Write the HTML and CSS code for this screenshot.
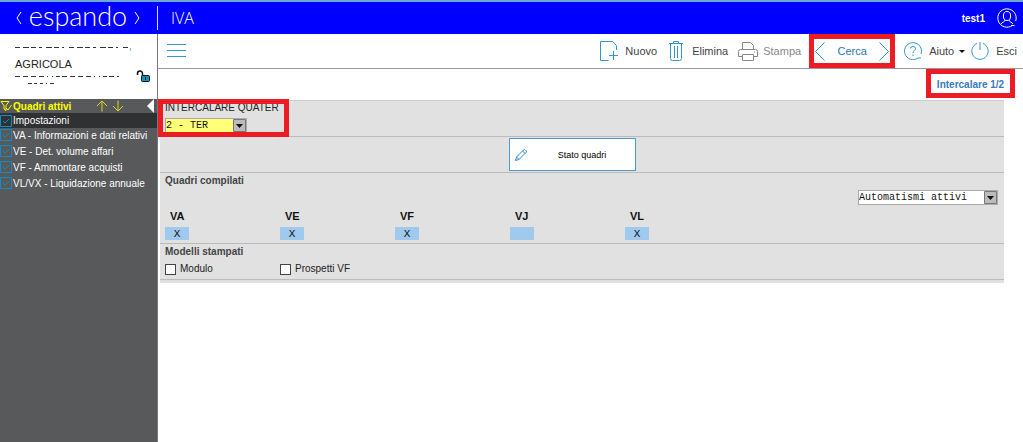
FILE: index.html
```html
<!DOCTYPE html>
<html lang="it">
<head>
<meta charset="utf-8">
<title>espando IVA</title>
<link rel="stylesheet" href="styles.css">
</head>
<body>
<header class="topbar">
  <div class="brand">
    <svg class="bracket" viewBox="0 0 6 14"><path d="M5 1 1 7l4 6"/></svg>
    <span class="brand-name">espando</span>
    <svg class="bracket" viewBox="0 0 6 14"><path d="m1 1 4 6-4 6"/></svg>
  </div>
  <h1 class="module">IVA</h1>
  <span class="user">test1</span>
  <svg class="avatar" viewBox="0 0 20 20"><path d="M15.500 17.400A9.200 9.200 0 1 1 18.700 13"/><ellipse cx="10" cy="8" rx="3.600" ry="4.500"/><path d="M4 16c1-2 4-2 4-4m4 0c0 2 3 2 4 4M14 17.500h3.500"/></svg>
</header>
<div class="shell">
  <aside class="side">
    <div class="company">
      <svg class="redacted" viewBox="0 0 116 6"><path stroke-dasharray="5 3 6 2 5 3 3 4 6 2 5 3 2 5" d="M0 1.500h115"/><path class="faint" d="M115.500 2v3"/></svg>
      <div class="company-name">AGRICOLA</div>
      <svg class="redacted low" viewBox="0 0 116 12"><path stroke-dasharray="5 3 5 3 5 3 5 3 1 4 1 3 4 2" d="M0 1.500h104"/><path stroke-dasharray="4 2 3 3 3 3 1 3" d="M13 8.500h28"/></svg>
      <svg class="lock" viewBox="0 0 14 13"><path class="shackle" d="M1.500 5V3.500a2.500 2.500 0 0 1 5 0V6"/><rect x="5.500" y="5.500" width="8" height="6" rx="1"/><path d="M9.500 7v3"/></svg>
    </div>
    <nav class="menu">
      <div class="menu-head">
        <svg class="filter" viewBox="0 0 12 12"><path d="M1 1.500h8L6 5.500v5L4 9V5.500zM6 8l2 2 3.500-5"/></svg>
        <span class="menu-title">Quadri attivi</span>
        <svg class="arrow" viewBox="0 0 12 12"><path d="M6 11.500V1M1 6l5-5 5 5"/></svg>
        <svg class="arrow" viewBox="0 0 12 12"><path d="M6 .500V11M1 6l5 5 5-5"/></svg>
        <svg class="collapse" viewBox="0 0 7 14"><path d="M7 0v14L0 7z"/></svg>
      </div>
      <a class="item current" href="#"><svg class="tick" viewBox="0 0 12 12"><path d="M.5.5h11v11H.5zM3 6l2 2 4-4"/></svg>Impostazioni</a>
      <a class="item" href="#"><svg class="tick" viewBox="0 0 12 12"><path d="M.5.5h11v11H.5zM3 6l2 2 4-4"/></svg>VA - Informazioni e dati relativi</a>
      <a class="item" href="#"><svg class="tick" viewBox="0 0 12 12"><path d="M.5.5h11v11H.5zM3 6l2 2 4-4"/></svg>VE - Det. volume affari</a>
      <a class="item" href="#"><svg class="tick" viewBox="0 0 12 12"><path d="M.5.5h11v11H.5zM3 6l2 2 4-4"/></svg>VF - Ammontare acquisti</a>
      <a class="item" href="#"><svg class="tick" viewBox="0 0 12 12"><path d="M.5.5h11v11H.5zM3 6l2 2 4-4"/></svg>VL/VX - Liquidazione annuale</a>
    </nav>
  </aside>
  <main class="main">
    <div class="toolbar">
      <button class="tool burger" aria-label="Menu"><svg viewBox="0 0 19 14"><path d="M0 .5h19M0 6.500h19M0 12.500h19"/></svg></button>
      <button class="tool nuovo"><svg viewBox="0 0 18 20"><path d="M8.500 19.500H.5V.5h12l4 4V9M13.500 10v9M9 14.500h9"/></svg>Nuovo</button>
      <button class="tool elimina"><svg viewBox="0 0 14 20"><path d="M0 2.500h14M4.500 2.500V.5h5v2M1.500 2.500v15q0 2 2 2h7q2 0 2-2v-15M5.500 5v12M8.500 5v12"/></svg>Elimina</button>
      <button class="tool stampa" disabled><svg viewBox="0 0 20 20"><path d="M4.500 8V1.500h8l3 3V8M4.500 15.500h-4v-5q0-2 2-2h15q2 0 2 2v5h-4M4.500 13.500h11v6h-11zM16 11h1"/></svg>Stampa</button>
      <div class="search marked">
        <button class="tool" aria-label="Precedente"><svg viewBox="0 0 10 19"><path d="m9.500.5-9 9 9 9"/></svg></button>
        <button class="tool cerca">Cerca</button>
        <button class="tool" aria-label="Successivo"><svg viewBox="0 0 10 19"><path d="m.5.5 9 9-9 9"/></svg></button>
      </div>
      <button class="tool aiuto"><svg viewBox="0 0 18 18"><path d="M14 16A8.500 8.500 0 1 1 17 12M14 16h3M6.500 6.500q0-2 2.500-2t2.500 2c0 2-2.500 2-2.500 4.500M9 12.500v1.500"/></svg>Aiuto<span class="caret"></span></button>
      <button class="tool esci"><svg viewBox="0 0 18 18"><path d="M6 1.500a8.200 8.200 0 1 0 6 0M9 0v8"/></svg>Esci</button>
    </div>
    <div class="pager"><span class="page marked">Intercalare 1/2</span></div>
    <form class="panel">
      <section class="row selector">
        <label for="inter">INTERCALARE QUATER</label>
        <select id="inter" class="combo yellow"><option>2 - TER</option></select>
        <div class="outline"></div>
      </section>
      <section class="row status">
        <button type="button" class="stato"><svg viewBox="0 0 12 12"><path d="m.5 11.500 1-3.500 7-7q1-1 2 0l.5.500q1 1 0 2l-7 7zM7.500 2l2.500 2.500M1.500 8 4 10.500"/></svg><span>Stato quadri</span></button>
      </section>
      <section class="row filled">
        <h2>Quadri compilati</h2>
        <select class="combo auto" aria-label="Automatismi"><option>Automatismi attivi</option></select>
        <div class="fields">
          <label>VA<input value="X"></label>
          <label>VE<input value="X"></label>
          <label>VF<input value="X"></label>
          <label>VJ<input value=""></label>
          <label>VL<input value="X"></label>
        </div>
      </section>
      <section class="row printed">
        <h2>Modelli stampati</h2>
        <div class="checks">
          <label><input type="checkbox">Modulo</label>
          <label><input type="checkbox">Prospetti VF</label>
        </div>
      </section>
    </form>
  </main>
</div>
</body>
</html>
```

FILE: styles.css
```css
* { box-sizing: border-box; }
body {
  margin: 0;
  min-height: 100vh;
  display: flex;
  flex-direction: column;
  font-family: "Liberation Sans", Arial, sans-serif;
  font-size: 10px;
  color: #222;
  background: #fff;
}
svg { display: block; flex: none; fill: none; stroke: currentColor; }
button { font: inherit; color: inherit; border: 0; padding: 0; background: none; }
h1, h2 { margin: 0; }

.topbar {
  display: flex;
  align-items: center;
  height: 34px;
  border-top: 2px solid #68a9cd;
  background: #00f;
  color: #fff;
  padding-right: 6px;
}
.brand {
  display: flex;
  align-items: center;
  justify-content: space-between;
  width: 158px;
  height: 24px;
  padding: 0 17px 0 16px;
  border-right: 1px solid #dde;
}
.bracket { width: 6px; height: 14px; }
.brand-name { font: 300 27px/26px Lato, sans-serif; height: 30px; }
.module { flex: 1; padding-left: 13px; font: 300 16px/20px "Open Sans", sans-serif; }
.user { font-weight: bold; margin-right: 12px; }
.avatar { width: 20px; height: 20px; }

.shell { display: flex; flex: 1; }
.side {
  width: 158px;
  flex: none;
  display: flex;
  flex-direction: column;
  border-right: 1px solid #777;
}
.company { position: relative; height: 65px; padding: 12px 0 0 15px; }
.redacted { width: 116px; height: 6px; stroke: #333; }
.redacted.low { height: 12px; }
.redacted .faint { stroke: #8bc4e4; }
.company-name { margin: 5px 0 4px; font-size: 11px; line-height: 14px; }
.lock { position: absolute; right: 7px; bottom: 16px; width: 14px; height: 13px; color: #111; }
.lock rect { fill: #178fc0; }
.lock .shackle { stroke-width: 1.5; }

.menu { flex: 1; background: #57595b; color: #fff; }
.menu-head { display: flex; align-items: center; height: 14px; color: #ff0; }
.filter { width: 12px; height: 12px; }
.menu-title { flex: 1; padding-left: 1px; font-weight: bold; }
.arrow { width: 12px; height: 12px; margin-right: 4px; color: #d8d820; }
.collapse { width: 7px; height: 14px; margin: 0 3px 0 19px; fill: #fff; stroke: none; }
.item {
  display: flex;
  align-items: center;
  gap: 1px;
  height: 16px;
  padding-bottom: 2px;
  color: #fff;
  text-decoration: none;
  white-space: nowrap;
}
.item.current { height: 15px; padding-bottom: 0; background: #303133; }
.tick { width: 12px; height: 12px; color: #158cc0; }

.main { flex: 1; min-width: 0; }
.toolbar {
  display: flex;
  align-items: center;
  height: 35px;
  border-bottom: 1px solid #999;
  padding: 0 6px 0 9px;
}
.tool { display: flex; align-items: center; gap: 7px; font-size: 11px; color: #444; white-space: nowrap; }
.tool svg { color: #2e98cf; }
.burger { margin-right: auto; }
.burger svg { width: 19px; height: 14px; }
.nuovo svg { width: 18px; height: 20px; }
.elimina { margin-left: 12px; gap: 9px; }
.elimina svg { width: 14px; height: 20px; }
.stampa { margin-left: 10px; gap: 5px; }
.stampa, .stampa svg { color: #888; }
.stampa svg { width: 20px; height: 20px; }
.marked { border: 5px solid #ed1c24; }
.search {
  display: flex;
  align-items: center;
  justify-content: space-between;
  width: 86px;
  height: 34px;
  margin: 0 9px 0 8px;
  padding: 0 1px;
}
.search svg { width: 10px; height: 19px; }
.tool.cerca { color: #2874b4; }
.aiuto svg, .esci svg { width: 18px; height: 18px; }
.caret { border: 3px solid transparent; border-top-color: #111; border-bottom: 0; margin-left: -2px; }
.esci { margin-left: 6px; }

.pager { display: flex; justify-content: flex-end; height: 31px; padding-right: 8px; }
.page { width: 89px; height: 29px; text-align: center; font-weight: bold; line-height: 21px; color: #3878bd; }

.panel { margin: 0 19px 0 2px; background: #e1e1e1; border-top: 1px solid #ccc; padding-bottom: 3px; }
.row { border-bottom: 1px solid #bbb; padding-left: 5px; }
.selector { position: relative; height: 36px; }
.selector label { display: block; line-height: 14px; }
.outline {
  position: absolute;
  left: -2px;
  top: -2px;
  width: 131px;
  height: 38px;
  border: 5px solid #ed1c24;
}
.combo {
  display: block;
  appearance: none;
  height: 15px;
  border: 1px solid #aaa;
  border-radius: 0;
  padding: 0;
  font: 10px/13px "Liberation Mono", monospace;
  color: #111;
  background: #fff url("data:image/svg+xml,%3Csvg xmlns='http://www.w3.org/2000/svg' width='13' height='13'%3E%3Cpath d='M.5.5h12v12H.5z' fill='%23bbb' stroke='%23777'/%3E%3Cpath d='M3 5h7L6.500 9z' fill='%23111'/%3E%3C/svg%3E") right center no-repeat;
}
.yellow { width: 82px; margin-top: 3px; background-color: #ffff78; }
.status { display: flex; justify-content: center; height: 36px; padding: 1px 19px 0 0; }
.stato {
  display: flex;
  align-items: center;
  width: 127px;
  height: 33px;
  padding: 0 5px;
  border: 1px solid #4a9bd0;
  background: #fff;
  font-size: 9px;
  color: #000;
}
.stato svg { width: 12px; height: 12px; color: #2889d0; }
.stato span { flex: 1; padding-left: 7px; }
h2 { font-size: 10px; line-height: 15px; color: #444; }
.filled { height: 71px; }
.auto { width: 140px; margin: 2px 6px 0 auto; }
.fields, .checks { display: grid; grid-template-columns: repeat(7, 115px); }
.fields { margin-top: 4px; }
.fields label { font-size: 11px; font-weight: bold; line-height: 14px; padding-left: 5px; color: #111; }
.fields input {
  display: block;
  width: 24px;
  height: 13px;
  margin: 4px 0 0 -5px;
  padding: 0;
  border: 0;
  background: #9fcaed;
  font: 11px "Liberation Mono", monospace;
  text-align: center;
  color: #111;
}
.printed { height: 36px; }
.checks { margin-top: 4px; }
.checks label { display: flex; align-items: center; gap: 4px; line-height: 12px; }
.checks input { appearance: none; width: 11px; height: 11px; margin: 0; border: 1px solid #444; background: #fff; }
```
